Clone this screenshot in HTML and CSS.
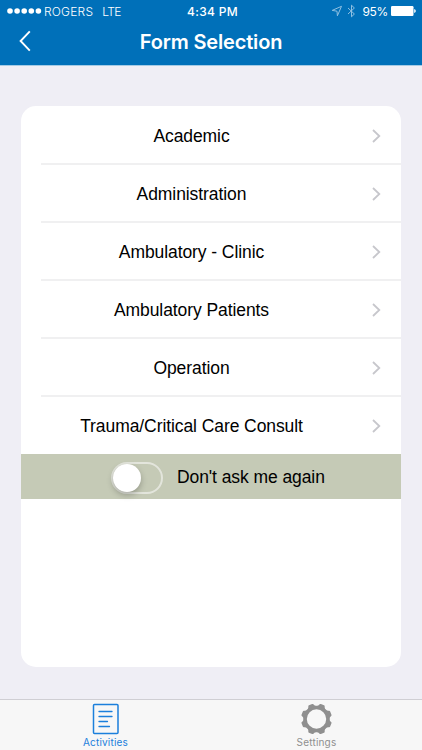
FILE: index.html
```html
<!DOCTYPE html>
<html lang="en">
<head>
  <meta charset="UTF-8" />
  <meta name="viewport" content="width=device-width, initial-scale=1" />
  <title>Form Selection</title>
  <link rel="stylesheet" href="styles.css">
</head>
<body>

  <header class="header">
    <div class="status-bar">
      <div class="status-left">
        <svg class="signal" width="35" height="6" viewBox="0 0 35 6" fill="#fff" aria-hidden="true">
          <circle cx="3" cy="3" r="2.8" />
          <circle cx="10.1" cy="3" r="2.8" />
          <circle cx="17.2" cy="3" r="2.8" />
          <circle cx="24.3" cy="3" r="2.8" />
          <circle cx="31.4" cy="3" r="2.8" />
        </svg>
        <span class="carrier">ROGERS</span>
        <span class="network">LTE</span>
      </div>
      <span class="clock">4:34 PM</span>
      <div class="status-right">
        <svg class="location" width="12" height="12" viewBox="0 0 12 12" fill="none" stroke="#8fc0e2" stroke-linejoin="round" aria-hidden="true">
          <path d="M10.5 1.3 L1.2 5.4 L6 6.2 L6.4 10.8 Z" />
        </svg>
        <svg class="bluetooth" width="9" height="14" viewBox="0 0 9 14" fill="none" stroke="#8fc0e2" aria-hidden="true">
          <path d="M1 4 L7.4 10 L4.5 12.8 V1.2 L7.4 4 L1 10" />
        </svg>
        <span class="percent">95%</span>
        <svg class="battery" width="26" height="10" viewBox="0 0 26 10" fill="#fff" aria-hidden="true">
          <rect x="0" y="0" width="22.5" height="10" rx="1.2" />
          <path d="M23.2 3 q1.6 0.5 1.6 2 t-1.6 2 Z" />
        </svg>
      </div>
    </div>
    <div class="nav-bar">
      <button class="back" aria-label="Back">
        <svg width="12" height="22" viewBox="0 0 12 22" fill="none" stroke="#fff" stroke-width="1.9" aria-hidden="true">
          <path d="M10.8 1.4 L1.6 11 L10.8 20.6" />
        </svg>
      </button>
      <h1>Form Selection</h1>
    </div>
  </header>

  <main class="content">
    <div class="card">
      <ul class="form-list">
        <li><span class="label">Academic</span><svg class="chevron" viewBox="0 0 9 14"><path d="M1 1 L7.3 7 L1 13" /></svg></li>
        <li><span class="label">Administration</span><svg class="chevron" viewBox="0 0 9 14"><path d="M1 1 L7.3 7 L1 13" /></svg></li>
        <li><span class="label">Ambulatory - Clinic</span><svg class="chevron" viewBox="0 0 9 14"><path d="M1 1 L7.3 7 L1 13" /></svg></li>
        <li><span class="label">Ambulatory Patients</span><svg class="chevron" viewBox="0 0 9 14"><path d="M1 1 L7.3 7 L1 13" /></svg></li>
        <li><span class="label">Operation</span><svg class="chevron" viewBox="0 0 9 14"><path d="M1 1 L7.3 7 L1 13" /></svg></li>
        <li><span class="label">Trauma/Critical Care Consult</span><svg class="chevron" viewBox="0 0 9 14"><path d="M1 1 L7.3 7 L1 13" /></svg></li>
      </ul>
      <div class="ask-row">
        <div class="switch" role="switch" aria-checked="false" aria-label="Don't ask me again"><div class="knob"></div></div>
        <span class="label">Don't ask me again</span>
      </div>
    </div>
  </main>

  <nav class="tab-bar">
    <div class="tab active">
      <svg width="32" height="32" viewBox="0 0 32 32" fill="none" stroke="#1b7fdc" aria-hidden="true">
        <rect x="3.5" y="1.5" width="24.5" height="29" rx="1" stroke-width="1.5" />
        <path d="M9 8.5 H22 M9 13.5 H22 M9 18.5 H17.5 M9 23.5 H19.5" stroke-width="1.3" stroke-linecap="round" />
      </svg>
      <span>Activities</span>
    </div>
    <div class="tab">
      <svg width="32" height="32" viewBox="-15.5 -16 32 32" fill="#8f8f8f" aria-hidden="true">
        <circle r="11.5" fill="none" stroke="#8f8f8f" stroke-width="3.6" />
        <g transform="rotate(22.5)">
          <path id="tooth" d="M-4.6 -12.2 Q-3.2 -13 -2.9 -14.4 Q-2.7 -15.5 -1.7 -15.5 H1.7 Q2.7 -15.5 2.9 -14.4 Q3.2 -13 4.6 -12.2 Z" />
          <use href="#tooth" transform="rotate(45)" />
          <use href="#tooth" transform="rotate(90)" />
          <use href="#tooth" transform="rotate(135)" />
          <use href="#tooth" transform="rotate(180)" />
          <use href="#tooth" transform="rotate(225)" />
          <use href="#tooth" transform="rotate(270)" />
          <use href="#tooth" transform="rotate(315)" />
        </g>
      </svg>
      <span>Settings</span>
    </div>
  </nav>

</body>
</html>
```
FILE: styles.css
```css
* {
  box-sizing: border-box;
  margin: 0;
  padding: 0;
}

body {
  font-family: Inter, "Liberation Sans", sans-serif;
  background: #efeef5;
  width: 422px;
  height: 750px;
  display: flex;
  flex-direction: column;
  overflow: hidden;
}

svg {
  display: block;
  flex: none;
}

/* Header */
.header {
  height: 66px;
  background: #0070b9;
  border-bottom: 1px solid #a5cbe5;
  color: #fff;
}

.status-bar {
  display: grid;
  grid-template-columns: 1fr auto 1fr;
  align-items: center;
  height: 22px;
  padding: 0 5px 0 7px;
  font-size: 12px;
  white-space: nowrap;
}

.status-left,
.status-right {
  display: flex;
  align-items: center;
}

.status-right {
  justify-content: flex-end;
}

.carrier {
  margin-left: 2px;
  font-weight: 300;
  letter-spacing: 0.2px;
}

.network {
  margin-left: 9px;
  font-weight: 300;
  letter-spacing: -0.6px;
}

.clock {
  padding-left: 1px;
  font-weight: 500;
  letter-spacing: 0.3px;
}

.bluetooth {
  margin-left: 4px;
}

.percent {
  margin: 0 3px 0 6px;
  letter-spacing: -0.3px;
}

.nav-bar {
  display: grid;
  grid-template-columns: 60px 1fr 60px;
  align-items: center;
  height: 40px;
}

.back {
  padding-left: 19px;
  margin-top: -2px;
  background: none;
  border: none;
}

h1 {
  font-size: 20px;
  font-weight: 600;
  line-height: 24px;
  letter-spacing: -0.15px;
  text-align: center;
}

/* Form list */
.content {
  flex: 1;
  padding: 40px 21px 32px;
}

.card {
  height: 561px;
  background: #fff;
  border-radius: 15px;
  overflow: hidden;
}

.label {
  font-family: "Liberation Sans", Arial, sans-serif;
  font-size: 17.5px;
  line-height: 22px;
  letter-spacing: -0.08px;
  color: #000;
  white-space: nowrap;
}

.form-list {
  height: 348px;
  padding-top: 1px;
  list-style: none;
}

.form-list li {
  display: flex;
  align-items: center;
  height: 58px;
  margin-left: 20px;
  padding: 1px 20px 0 0;
  border-bottom: 2px solid #f0f0f1;
}

.form-list li:last-child {
  height: 57px;
  padding-top: 0;
  border-bottom: none;
}

.form-list .label {
  flex: 1;
  padding-right: 30px;
  text-align: center;
}

.chevron {
  width: 9px;
  height: 14px;
  fill: none;
  stroke: #c7c7cc;
  stroke-width: 1.8;
}

.ask-row {
  display: flex;
  align-items: center;
  height: 45px;
  padding-left: 90px;
  background: #c5cab6;
}

.switch {
  width: 52px;
  height: 32px;
  margin: 3px 14px 0 0;
  border: 2px solid #e3e5dc;
  border-radius: 16px;
}

.knob {
  width: 28px;
  height: 28px;
  border-radius: 50%;
  background: #fff;
  box-shadow: 0 3px 6px rgba(0, 0, 0, 0.25);
}

/* Tab bar */
.tab-bar {
  display: flex;
  height: 51px;
  background: #f7f7f7;
  border-top: 1px solid #cfced3;
}

.tab {
  flex: 1;
  display: flex;
  flex-direction: column;
  align-items: center;
  padding-top: 3px;
  font-size: 10px;
  line-height: 14px;
  letter-spacing: 0.2px;
  color: #8f8f8f;
}

.tab.active {
  color: #1b7fdc;
}
```
